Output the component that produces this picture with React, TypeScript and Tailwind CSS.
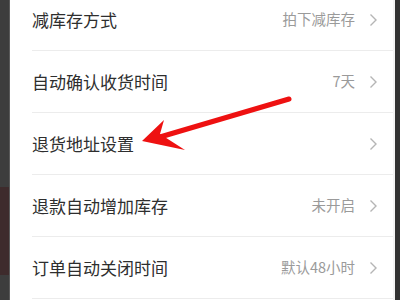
import React from "react";

const rows = [
  { label: "减库存方式", value: "拍下减库存" },
  { label: "自动确认收货时间", value: "7天" },
  { label: "退货地址设置", value: "" },
  { label: "退款自动增加库存", value: "未开启" },
  { label: "订单自动关闭时间", value: "默认48小时" },
];

function Chevron() {
  return (
    <svg width="9" height="14" viewBox="0 0 9 14" className="shrink-0">
      <path d="M1.5 1.5 L7 7 L1.5 12.5" fill="none" stroke="#b5b5b5" strokeWidth="1.4" />
    </svg>
  );
}

export default function App() {
  return (
    <div
      className="relative flex h-[300px] w-[400px] overflow-hidden bg-white"
      style={{ fontFamily: '"Noto Sans CJK SC", "Noto Sans", sans-serif' }}
    >
      <div className="flex w-[10px] shrink-0 flex-col border-r border-[#5a5a5a] bg-[#3c3c3c]">
        <div className="h-[187px] bg-[#3d3d3d]" />
        <div className="h-[88px] bg-[#3e2b2c]" />
        <div className="flex-1 bg-[#3d3d3d]" />
      </div>
      <div className="flex flex-1 flex-col pl-[22px]">
        <div className="mt-[-11px] flex flex-col">
          {rows.map((r) => (
            <div
              key={r.label}
              className="flex h-[62px] shrink-0 items-center border-b border-[#ececec] pr-[15px]"
            >
              <span className="flex-1 text-[17px] leading-none text-[#2e2e2e]">{r.label}</span>
              <span className="mr-[14px] text-[14.5px] leading-none text-[#9a9a9a]">{r.value}</span>
              <Chevron />
            </div>
          ))}
        </div>
      </div>
      <div className="w-[2px] shrink-0 bg-[#f4f4f4]" />
      <div className="w-[5px] shrink-0 bg-[#323232]" />
      <svg className="absolute left-0 top-0" width="400" height="300" viewBox="0 0 400 300">
        <line x1="289" y1="99" x2="160" y2="137" stroke="#ee1111" strokeWidth="5" strokeLinecap="round" />
        <path d="M142 141 L164 120 L160 134 L185 150 Z" fill="#ee1111" />
      </svg>
    </div>
  );
}
